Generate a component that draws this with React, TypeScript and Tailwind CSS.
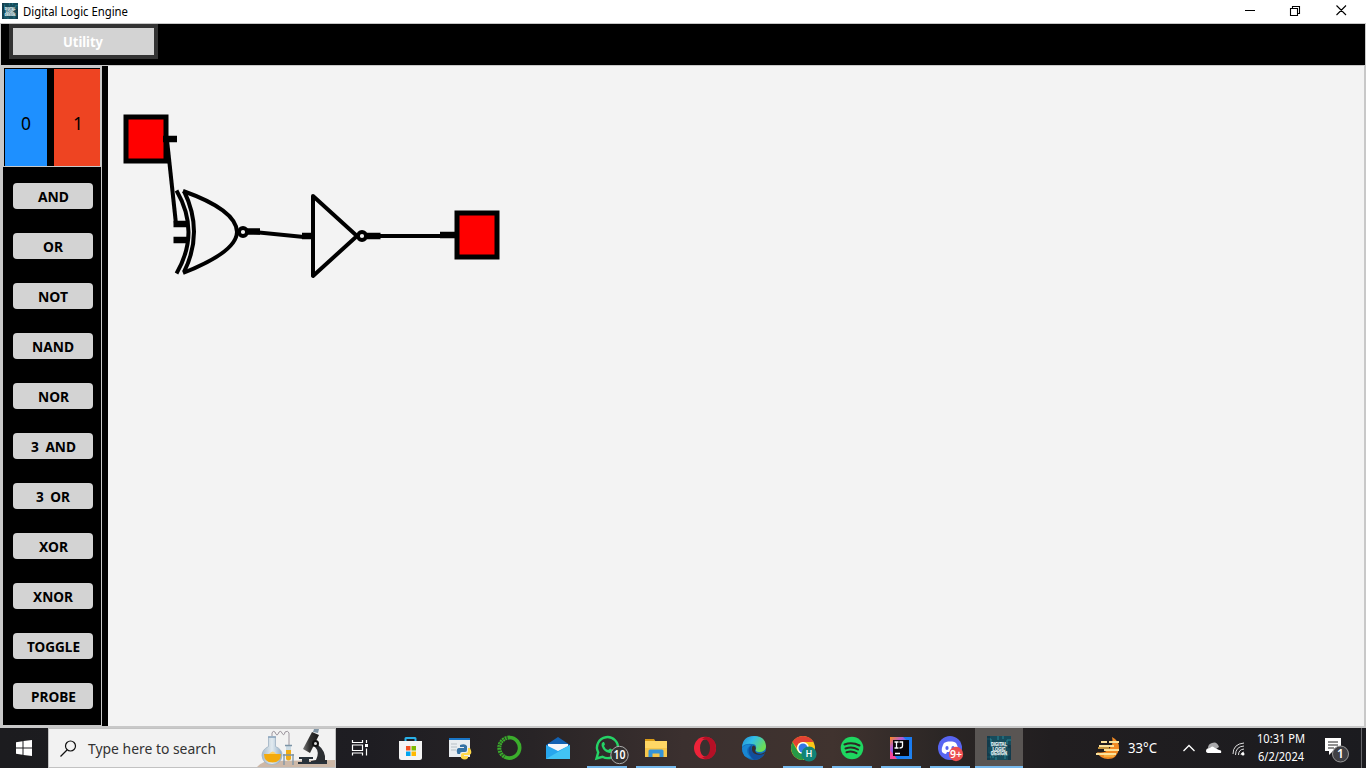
import React from "react";

const gates = ["AND", "OR", "NOT", "NAND", "NOR", "3 AND", "3 OR", "XOR", "XNOR", "TOGGLE", "PROBE"];
const gateWidths = [31, 20, 30, 42, 31, 45, 34, 29, 40, 53, 45];

/* Text fitted to an exact advance width. */
function Label({ text, width, size, weight = 400, fill = "#000", height = 20, base = 15, gap = 0 }: {
  text: string; width: number; size: number; weight?: number; fill?: string; height?: number; base?: number; gap?: number;
}) {
  return (
    <svg width={width} height={height} className="block shrink-0 overflow-visible">
      <text x="0" y={base} textLength={width} lengthAdjust="spacingAndGlyphs" fontFamily={'"Noto Sans", "Open Sans", sans-serif'} fontSize={size} fontWeight={weight} fill={fill} wordSpacing={gap}>
        {text}
      </text>
    </svg>
  );
}

function DldIcon({ size }: { size: number }) {
  return (
    <svg width={size} height={size} viewBox="0 0 24 24" className="block shrink-0 overflow-visible">
      <rect width="24" height="24" fill="#174c5c" />
      <path d="M0 3h4v5h2M24 4h-4v4M2 11v6h4v5M22 12v7h-4v4M11 0v4M16 0v3M0 21h4M9 24v-3" stroke="#2b8796" fill="none" />
      <path d="M0 0h3v24H0zM21 9h3v15h-3z" fill="#0f3041" opacity=".6" />
      <g fontFamily='"Liberation Sans", sans-serif' fontWeight="700" fontSize="6" fill="#e6f1f2" stroke="#e6f1f2" strokeWidth=".25" textAnchor="middle">
        <text x="12" y="9.800" textLength="16" lengthAdjust="spacingAndGlyphs">DIGITAL</text>
        <text x="12" y="14.600" textLength="13" lengthAdjust="spacingAndGlyphs">LOGIC</text>
        <text x="12" y="19.400" textLength="16" lengthAdjust="spacingAndGlyphs">DESIGN</text>
      </g>
    </svg>
  );
}

function Circuit() {
  return (
    <svg width="1256" height="660" viewBox="108 66 1256 660" className="block">
      <g stroke="#000" fill="none">
        <path d="M167 140L176 224" strokeWidth="4" />
        <path d="M248 231.5L304 237" strokeWidth="4" />
        <path d="M368 236H456" strokeWidth="4" />
        <rect x="126" y="117" width="40" height="44" fill="#f00" strokeWidth="5" />
        <rect x="457" y="213" width="40" height="44" fill="#f00" strokeWidth="5" />
        <path d="M163 139h14M173.500 224H188M173.500 240H188M245 231.500h15" strokeWidth="6.500" />
        <path d="M302 236h11M364 236h16.500M440 235h17" strokeWidth="6.500" />
        <g strokeWidth="4">
          <path d="M176.500 190.500Q200.500 232 176.500 273.500" />
          <path d="M183 191Q236.500 210 237 232Q236.500 252 183 273" />
          <path d="M184 191Q204 232 184 272" />
          <circle cx="243" cy="232" r="4" fill="#f3f3f3" strokeWidth="3.800" />
          <path d="M313 196L357 236L313 276Z" fill="#f3f3f3" strokeLinejoin="round" />
          <circle cx="362" cy="236" r="4" fill="#f3f3f3" strokeWidth="3.800" />
        </g>
      </g>
    </svg>
  );
}

function Lab() {
  return (
    <svg width="78" height="38" viewBox="258 729 78 38" className="ml-px block">
      <defs>
        <linearGradient id="glass" x1="0" x2="1"><stop stopColor="#a9bbc9" /><stop offset=".5" stopColor="#e1eaf0" /><stop offset="1" stopColor="#8eabc5" /></linearGradient>
        <linearGradient id="scope" x1="0" x2="1"><stop stopColor="#777" /><stop offset=".4" stopColor="#333" /><stop offset="1" stopColor="#191919" /></linearGradient>
      </defs>
      <path d="M258 767q4-5 12-6l66-1v7z" fill="#cdb8a7" />
      <path d="M273 736v-3q1-3 3-1 2 6 4 0 2-2 3 1 2 4 3-1 3-2 4 1v13" fill="none" stroke="#9d969e" strokeWidth="1" />
      <path d="M269.500 737h7v9.500q7 3 6.500 9-1 9-10 9t-10-9q0-6 6.500-9z" fill="url(#glass)" stroke="#9eb1c3" strokeWidth=".8" />
      <path d="M265 754h17q0 8.500-8.500 8.500T265 754z" fill="#f3aa0c" /><path d="M270 754q4-5 7 0z" fill="#ffd367" /><path d="M269 737h8" stroke="#8ba5bd" strokeWidth="1.500" />
      <path d="M287 745h5v15h-5z" fill="#cbdbe4" /><path d="M287 750h5v9q-2.500 3-5 0z" fill="#f2ac12" />
      <path d="M284 755h11M285 754v11M294 754v11M286 745.500h7" stroke="#7c94a6" strokeWidth="1.300" />
      <path d="M315 729h5l-1 4-5-1z" fill="#8095a5" />
      <path d="M313 732l7 3-9 18-7-4z" fill="url(#scope)" />
      <path d="M318 744q9 7 8 16h2v4h-16v-3l5-1q4-8-1-13z" fill="#2b2e32" />
      <circle cx="316.500" cy="743.500" r="2.500" fill="#ddd" stroke="#111" strokeWidth="2" />
      <path d="M300 757h14v2h-14zM303 759h7v3h-7zM299 762h29v2h-29z" fill="#29323a" />
    </svg>
  );
}

function TaskIcon({ name }: { name: string }) {
  switch (name) {
    case "store":
      return <><path d="M6.500 6V2.500q0-.5.500-.5h9q.5 0 .5.5V6" fill="none" stroke="#29b1e8" strokeWidth="2" /><path d="M0 5h23v16.500q0 2.500-2.500 2.500h-18Q0 24 0 21.500z" fill="#f4f4f4" /><path d="M7 10h4.500v4.500H7z" fill="#f25022" /><path d="M12.500 10H17v4.500h-4.500z" fill="#7fba00" /><path d="M7 15.500h4.500V20H7z" fill="#00a4ef" /><path d="M12.500 15.500H17V20h-4.500z" fill="#ffb900" /></>;
    case "python":
      return <><path d="M1 2h21v19H1z" fill="#e9edf0" /><path d="M1 2h21v2H1z" fill="#1976c8" /><path d="M3 8h6M3 11h6M3 14h5" stroke="#b7bfc5" /><path d="M12 9q5-2 7 1v4q0 2-2 2h-3q-2 0-2 2H9.500q-2-5 1-6H16v-1h-4z" fill="#3573a5" /><path d="M20 12h2q3 6-1 7h-5v1h4v2q-3 3-7 0v-3q0-2 2-2h3q2 0 2-2z" fill="#ffd84a" /></>;
    case "anaconda":
      return <><path d="M12 1.500a10.300 10.300 0 1 1-4.500 19.400" fill="none" stroke="#3bad2c" strokeWidth="3.700" /><path d="M12.500 1.500A10.300 10.300 0 0 0 8 21" fill="none" stroke="#3bad2c" strokeWidth="4" strokeDasharray="2 .7" /><path d="M10 2A10 10 0 0 0 5 19" fill="none" stroke="#25222a" strokeWidth=".7" strokeDasharray="1 2" /></>;
    case "mail":
      return <><path d="M0 9L12 1l12 8v14H0z" fill="#1262b3" /><path d="M2 8h20v8H2z" fill="#f4f7fa" /><path d="M0 9l12 6 12-6v14H0z" fill="#27a6ed" /><path d="M0 23L24 9v14z" fill="#42c3f4" /></>;
    case "whatsapp":
      return <><path d="M1.500 22.500l1.700-6.100A10.500 10.500 0 1 1 7.500 20.800z" fill="none" stroke="#25d366" strokeWidth="2.400" /><path d="M8 6q-2 1-1.400 4 2 6 8 7 3 0 3.500-3l-3-1.600-2 1.700Q10 13 9 10l1-1.700L9 6z" fill="#25d366" /><circle cx="24.500" cy="19" r="8.700" fill="#353232" stroke="#aaa" /><text x="24.500" y="23" textAnchor="middle" fontFamily="Noto Sans" fontWeight="600" fontSize="12" fill="#fff" textLength="12" lengthAdjust="spacingAndGlyphs">10</text></>;
    case "explorer":
      return <><path d="M1 3h9l2 3H1z" fill="#d99b16" /><path d="M1 5h22v16H1z" fill="#ffd765" /><path d="M1 12h22v9H1z" fill="#f6c64b" /><path d="M4.500 21v-6q0-1.500 1.500-1.500h12q1.500 0 1.500 1.500v6h-4v-3.500h-7V21z" fill="#3594d8" /></>;
    case "opera":
      return <><ellipse cx="12" cy="12" rx="11" ry="11.300" fill="#ed2339" /><path d="M15 1q8 2 8 11t-8 11q-3 1-6-2 7 1 7-9T9 3q3-3 6-2z" fill="#b51026" /><ellipse cx="12" cy="12" rx="5" ry="8.500" fill="#3a302f" /></>;
    case "edge":
      return <><defs><linearGradient id="edgeA" x1="0" y1="0" x2="1" y2=".5"><stop stopColor="#218bd0" /><stop offset=".45" stopColor="#32bde9" /><stop offset="1" stopColor="#6cdd55" /></linearGradient></defs><circle cx="12" cy="12" r="12" fill="#1170bd" /><path d="M0 11Q1 0 12 0t12 10q0 6-7 6-4 0-3-3 1-5-4-5-7-1-10 3z" fill="url(#edgeA)" /><path d="M9 9q-8 5 0 13Q0 22 0 12q4-5 9-3z" fill="#1986d2" /><path d="M10 9q-3 9 9 9 3 0 4-1-4 7-11 7Q5 18 7 12q1-2 3-3z" fill="#114f9d" /><path d="M12 9.500q3 2 1 5 1 4 7 3l4-2v1q-4 3-9 2-6-1-5-7 0-2 2-2z" fill="#372e2e" /></>;
    case "chrome":
      return <><circle cx="12" cy="12" r="12" fill="#fbc618" /><path d="M1.500 6Q5 0 12 0t10.500 6H12q-6 0-6 6z" fill="#e34133" /><path d="M1.500 6Q-2 13 3 20q4 4 9 4l5-9q-7 6-11-1z" fill="#279847" /><circle cx="12" cy="12" r="6" fill="#fff" /><circle cx="12" cy="12" r="4.500" fill="#3478e5" /><circle cx="18" cy="18" r="7.600" fill="#128477" /><text x="18" y="21.200" textAnchor="middle" fontFamily="Roboto" fontWeight="500" fontSize="9" fill="#fff">H</text></>;
    case "spotify":
      return <><circle cx="12" cy="12" r="11.300" fill="#1ed760" /><path d="M4.500 8.500Q12 5.500 19.500 9.500M5.500 12.500Q12 10 18 13.500M6.500 16.200q5.500-1.700 10 1" fill="none" stroke="#2d2925" strokeWidth="2" strokeLinecap="round" /></>;
    case "intellij":
      return <><defs><linearGradient id="ij" x1="0" y1="0" x2="1" y2="1"><stop stopColor="#ff8a1b" /><stop offset=".3" stopColor="#b05ad9" /><stop offset=".6" stopColor="#167cf5" /><stop offset="1" stopColor="#2384ee" /></linearGradient></defs><path d="M1 1h22v22H1z" fill="url(#ij)" /><path d="M14 1h9v8z" fill="#1a7bf2" /><path d="M1 14l7 9H1z" fill="#f7459a" /><path d="M4 4h16v16H4z" fill="#09050a" /><path d="M5.500 6h4M7.500 6v6M5.500 12h4M10.500 6h3v4q0 2-3 2M6 17.500h5" fill="none" stroke="#fff" strokeWidth="1.300" /></>;
    case "discord":
      return <><circle cx="12" cy="12" r="12" fill="#5865f2" /><path d="M6 7q3-2 5-1.500h2Q16 5 18 7q3 5 2 9-3 2-4 2l-1-2H9l-1 2q-2 0-4-2-1-4 2-9z" fill="#fff" /><ellipse cx="9" cy="12" rx="1.600" ry="2" fill="#5865f2" /><ellipse cx="15" cy="12" rx="1.600" ry="2" fill="#5865f2" /><circle cx="18" cy="18" r="7.200" fill="#ed4f51" /><text x="18" y="21.500" textAnchor="middle" fontFamily="Noto Sans" fontWeight="600" fontSize="10" fill="#fff" textLength="12" lengthAdjust="spacingAndGlyphs">9+</text></>;
    default:
      return null;
  }
}

const apps = ["store", "python", "anaconda", "mail", "whatsapp", "explorer", "opera", "edge", "chrome", "spotify", "intellij", "discord", "dld"];
const running = ["whatsapp", "explorer", "chrome", "spotify", "intellij", "discord"];

function Taskbar() {
  return (
    <footer className="flex h-10 w-full shrink-0 bg-[linear-gradient(90deg,#1c1c1f_0%,#1e1d22_27%,#282426_39%,#3b302f_50%,#40332f_61%,#2b2625_69%,#211e20_77%,#1b1b1f_100%)]">
      <div className="flex w-12 items-center justify-center">
        <svg width="16" height="16" viewBox="0 0 16 16"><path d="M0 2.300L6.500 1.300V7.500H0zM7.500 1.100L16 0v7.500H7.500zM0 8.500h6.500v6.200L0 13.800zM7.500 8.500H16V16l-8.500-1.100z" fill="#fff" /></svg>
      </div>
      <div className="flex w-72 items-center overflow-hidden border border-[#c2c2c2] bg-[#f2f2f2]">
        <svg width="17" height="17" viewBox="0 0 17 17" className="ml-[11px] shrink-0"><circle cx="10.500" cy="6" r="5" fill="none" stroke="#111" strokeWidth="1.200" /><path d="M7 10L.500 16.500" stroke="#111" strokeWidth="1.200" /></svg>
        <div className="ml-[11px] mt-px flex-1"><Label text="Type here to search" width={128} size={15} fill="#333" /></div>
        <Lab />
      </div>
      <div className="flex w-[51px] items-center pl-[15px]">
        <svg width="18" height="18" viewBox="0 0 18 18"><path d="M1.500 1v2.500h10V1M1.500 16.500V14h10v2.500M1.500 6h10v5.500h-10zM15.500 1v3M15.500 9.500v7" fill="none" stroke="#fff" strokeWidth="1.200" /><path d="M14 5h3v3h-3z" fill="#fff" /></svg>
      </div>
      <div className="flex gap-px">
        {apps.map((name) => (
          <div key={name} className={name === "dld" ? "flex h-10 w-12 flex-col items-center bg-[#595553] pt-2" : "flex h-10 w-12 flex-col items-center pt-2"}>
            {name === "dld" ? <DldIcon size={24} /> : <svg width="24" height="24" viewBox="0 0 24 24" className="block overflow-visible"><TaskIcon name={name} /></svg>}
            {running.includes(name) && <div className="mt-1.5 h-0.5 w-10 bg-[#76b9ed]" />}
            {name === "dld" && <div className="mt-1.5 h-0.5 w-12 bg-[#76b9ed]" />}
          </div>
        ))}
      </div>
      <div className="flex flex-1 items-center">
        <svg width="26" height="24" viewBox="0 0 26 24" className="ml-[72px]">
          <path d="M17 1Q25 5 24 13q-2 10-11 10-8 0-11-7 7 2 12-3t3-12z" fill="#f28b25" />
          <path d="M6 6h6M14 6h10M4 10h15M9 14h15M1 18h20" stroke="#fbe29b" strokeWidth="2" />
          <path d="M3 12h11M9 20h10" stroke="#f6b947" strokeWidth="1.300" />
        </svg>
        <div className="ml-[7px]"><Label text="33°C" width={29} size={14} fill="#fff" /></div>
        <svg width="12" height="8" viewBox="0 0 12 8" className="ml-[26px]"><path d="M.500 7L6 1.500 11.500 7" fill="none" stroke="#fff" strokeWidth="1.300" /></svg>
        <svg width="17" height="12" viewBox="0 0 17 12" className="ml-[10px]"><path d="M3 6q0-4 4-5 5-2 7 4l-6 4z" fill="#a9a9ab" /><path d="M1 9q0-3 4-3 2-3 5 0l4 2q3 0 2 3H4Q1 11 1 9z" fill="#fff" /></svg>
        <svg width="14" height="14" viewBox="0 0 14 14" className="ml-[10px] mt-0.5"><path d="M1 12Q1 2 12 1M3.500 13Q3.500 4.500 12 4M6.500 13Q6.500 7.500 12 7M9 13q0-2.500 3-3" fill="none" stroke="#ddd" strokeWidth="1" /><circle cx="11" cy="12" r="1.500" fill="#fff" /></svg>
        <div className="ml-[11px] flex w-12 flex-col items-center">
          <Label text="10:31 PM" width={48} height={18} base={13} size={12} fill="#fff" />
          <Label text="6/2/2024" width={46} height={18} base={13} size={12} fill="#fff" />
        </div>
        <svg width="25" height="25" viewBox="0 0 25 25" className="ml-5 mt-1 overflow-visible"><path d="M0 0h16v13H8l-4 4v-4H0z" fill="#fff" /><path d="M3 4h10M3 7h10M3 10h6" stroke="#222" /><circle cx="15.500" cy="16" r="8" fill="#404044" stroke="#999" /><text x="15.500" y="20.300" textAnchor="middle" fontFamily="Noto Sans" fontWeight="600" fontSize="12" fill="#fff">1</text></svg>
        <div className="ml-auto mr-1 h-10 w-px bg-[#66666a]" />
      </div>
    </footer>
  );
}

export default function App() {
  return (
    <div className="flex h-[768px] w-[1366px] flex-col overflow-hidden bg-[#c8c8c8] font-['Noto_Sans',sans-serif]">
      <header className="flex h-[23px] shrink-0 items-start bg-white pl-0.5 pt-[3px]">
        <DldIcon size={16} />
        <div className="ml-[5px]"><Label text="Digital Logic Engine" width={105} size={12} height={18} base={13} /></div>
        <svg width="104" height="12" viewBox="0 0 104 12" className="ml-auto mr-[19px] mt-px block"><path d="M2 6.500h10M47.500 4.500h7v7h-7zM49.500 4.500v-2h7v7h-2M93.500 1.500l9.500 9.500M103 1.500L93.500 11" fill="none" stroke="#000" strokeWidth="1.100" /></svg>
      </header>
      <nav className="mx-px mt-px flex h-[41px] shrink-0 bg-black pl-2">
        <button className="flex h-[35px] w-[149px] items-center justify-center border-4 border-[#333] bg-[#d3d3d3] pr-px">
          <Label text="Utility" width={40} size={13.5} weight={700} fill="#fff" height={19} base={15} />
        </button>
      </nav>
      <main className="mb-0.5 mt-px flex h-[660px] shrink-0">
        <aside className="ml-[3px] flex w-[98px] flex-col pt-0.5">
          <div className="ml-px flex h-[98px] w-24 border-l border-t border-black bg-black">
            <div className="flex w-[42px] items-center justify-center bg-[#1e90ff] pt-[15px]"><Label text="0" width={10} size={17.5} /></div>
            <div className="ml-[7px] flex flex-1 items-center justify-center bg-[#ee4422] pl-0.5 pt-[15px]"><Label text="1" width={10} size={17.5} /></div>
          </div>
          <div className="mt-px flex h-[558px] flex-col items-center gap-6 bg-black pl-px pt-4">
            {gates.map((gate, i) => (
              <button key={gate} className="flex h-[26px] w-20 shrink-0 items-center justify-center rounded bg-[#d3d3d3] pl-px">
                <Label text={gate} width={gateWidths[i]} size={13.6} weight={700} height={20} base={15.5} gap={3} />
              </button>
            ))}
          </div>
        </aside>
        <div className="ml-px w-1.5 bg-black" />
        <section className="w-[1256px] bg-[#f3f3f3]"><Circuit /></section>
      </main>
      <Taskbar />
    </div>
  );
}
